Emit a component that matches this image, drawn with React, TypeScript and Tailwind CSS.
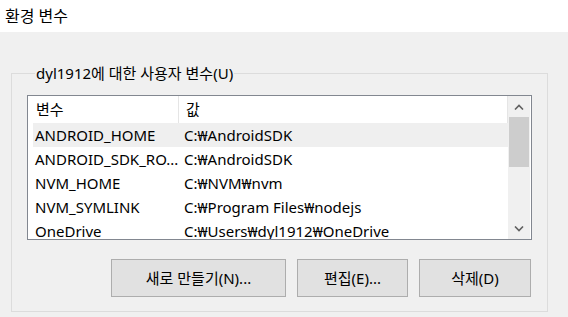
const rows = [
  { name: "ANDROID_HOME", value: "C:₩AndroidSDK", selected: true },
  { name: "ANDROID_SDK_RO...", value: "C:₩AndroidSDK" },
  { name: "NVM_HOME", value: "C:₩NVM₩nvm" },
  { name: "NVM_SYMLINK", value: "C:₩Program Files₩nodejs" },
  { name: "OneDrive", value: "C:₩Users₩dyl1912₩OneDrive" },
];

function Chevron({ up }: { up?: boolean }) {
  return (
    <svg width="10" height="6" viewBox="0 0 10 6" aria-hidden="true">
      <path
        d={up ? "M1 5.5 L5 1.5 L9 5.5" : "M1 0.5 L5 4.5 L9 0.5"}
        fill="none"
        stroke="#606060"
        strokeWidth="1.6"
      />
    </svg>
  );
}

export default function App() {
  return (
    <div className="h-[317px] w-[568px] overflow-hidden bg-[#f0f0f0] font-['Noto_Sans','Noto_Sans_CJK_KR',sans-serif] text-[15px] text-black">
      <header className="flex h-[32px] items-center bg-white pl-[5px] text-[16px]">
        환경 변수
      </header>

      <fieldset className="ml-[11px] mt-[31px] w-[537px] border border-[#dcdcdc] px-[15px] pb-[14px]">
        <legend className="ml-[8px] px-px leading-[20px]">
          dyl1912에 대한 사용자 변수(U)
        </legend>

        <div className="mt-[12px] flex h-[145px] border border-[#828790] bg-white">
          <div className="flex w-[480px] flex-col overflow-hidden">
            <div className="flex h-[27px] shrink-0 items-center">
              <div className="flex h-full w-[151px] items-center border-r border-[#e5e5e5] pl-[8px]">
                변수
              </div>
              <div className="flex h-full flex-1 items-center border-r border-[#e5e5e5] pl-[7px]">
                값
              </div>
            </div>
            {rows.map((r) => (
              <div
                key={r.name}
                className={`ml-[5px] flex h-[24px] shrink-0 items-center ${
                  r.selected ? "bg-[#efefef]" : ""
                }`}
              >
                <div className="w-[151px] pl-[2px] whitespace-nowrap">{r.name}</div>
                <div className="whitespace-nowrap">{r.value}</div>
              </div>
            ))}
          </div>

          <div className="flex w-[22px] flex-col bg-[#f0f0f0]">
            <div className="flex h-[21px] items-center justify-center">
              <Chevron up />
            </div>
            <div className="mx-px h-[50px] bg-[#cdcdcd]" />
            <div className="flex-1" />
            <div className="flex h-[21px] items-center justify-center">
              <Chevron />
            </div>
          </div>
        </div>

        <div className="mt-[19px] flex justify-end gap-[11px] pr-px">
          <button className="h-[38px] w-[175px] border border-[#adadad] bg-[#e1e1e1]">
            새로 만들기(N)...
          </button>
          <button className="h-[38px] w-[111px] border border-[#adadad] bg-[#e1e1e1]">
            편집(E)...
          </button>
          <button className="h-[38px] w-[112px] border border-[#adadad] bg-[#e1e1e1]">
            삭제(D)
          </button>
        </div>
      </fieldset>
    </div>
  );
}
